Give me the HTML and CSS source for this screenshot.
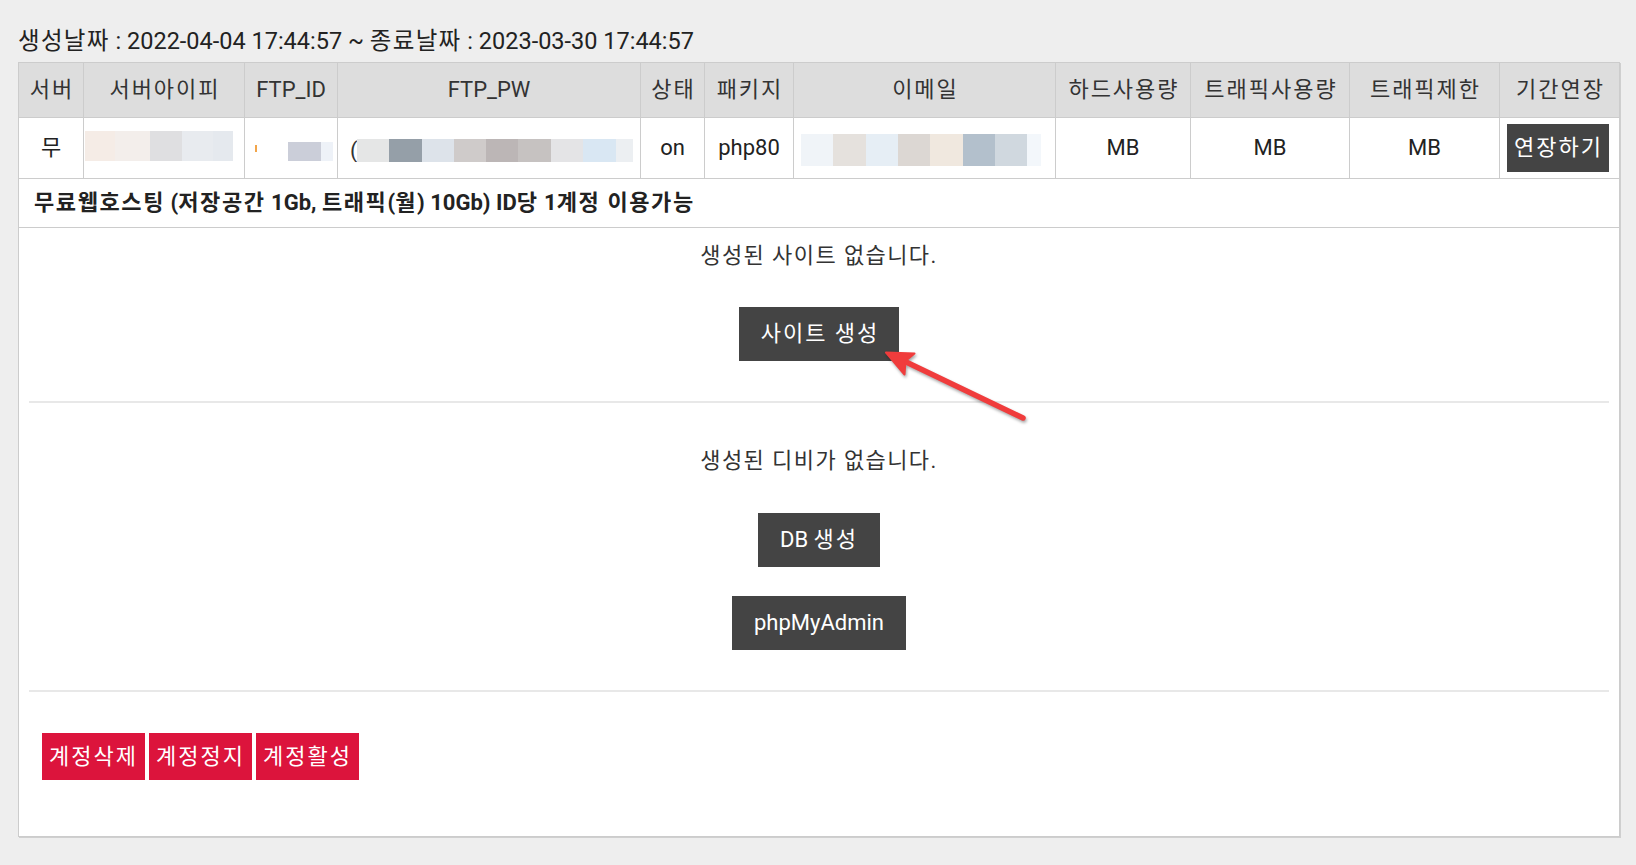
FILE: index.html
```html
<!DOCTYPE html>
<html lang="ko">
<head>
<meta charset="utf-8">
<title>호스팅 계정</title>
<link rel="stylesheet" href="styles.css">
</head>
<body>
<div class="page">
  <p class="period"><span class="ko">생성날짜</span> : 2022-04-04 17:44:57 ~ <span class="ko">종료날짜</span> : 2023-03-30 17:44:57</p>
  <table class="hosting">
    <colgroup>
      <col class="c-server"><col class="c-ip"><col class="c-ftpid"><col class="c-ftppw"><col class="c-state"><col class="c-pkg"><col class="c-mail"><col class="c-hdd"><col class="c-traffic"><col class="c-limit"><col class="c-extend">
    </colgroup>
    <thead>
      <tr>
        <th class="ko">서버</th><th class="ko">서버아이피</th><th>FTP_ID</th><th>FTP_PW</th><th class="ko">상태</th><th class="ko">패키지</th><th class="ko">이메일</th><th class="ko">하드사용량</th><th class="ko">트래픽사용량</th><th class="ko">트래픽제한</th><th class="ko">기간연장</th>
      </tr>
    </thead>
    <tbody>
      <tr class="data">
        <td>무</td>
        <td class="blur"><div class="mosaic m-ip">
          <span style="width:30px;background:#f5ece6"></span><span style="width:35px;background:#f3eeeb"></span><span style="width:32px;background:#dfdfe1"></span><span style="width:31px;background:#e8ebef"></span><span style="width:20px;background:#e5e9ee"></span>
        </div></td>
        <td class="blur"><div class="mosaic m-id">
          <span class="dot"></span><span style="width:33px;background:#cbced9"></span><span style="width:12px;background:#eef2f8"></span>
        </div></td>
        <td class="blur"><div class="mosaic m-pw">
          <span class="paren">(</span><span style="width:32px;background:#e5e6e6"></span><span style="width:33px;background:#959fa8"></span><span style="width:32px;background:#dde3ea"></span><span style="width:32px;background:#cfcbca"></span><span style="width:32px;background:#bcb6b6"></span><span style="width:33px;background:#c6c2c1"></span><span style="width:32px;background:#e4e4e6"></span><span style="width:33px;background:#d9e7f3"></span><span style="width:17px;background:#eceff2"></span>
        </div></td>
        <td>on</td>
        <td>php80</td>
        <td class="blur"><div class="mosaic m-mail">
          <span style="width:32px;background:#f0f4f8"></span><span style="width:33px;background:#e5e1dd"></span><span style="width:32px;background:#e6eef5"></span><span style="width:32px;background:#dcd7d3"></span><span style="width:33px;background:#f0e8df"></span><span style="width:32px;background:#b3c0cc"></span><span style="width:32px;background:#d0d8df"></span><span style="width:14px;background:#f3f7fb"></span>
        </div></td>
        <td>MB</td>
        <td>MB</td>
        <td>MB</td>
        <td class="extend"><a class="btn btn-dark btn-small ko">연장하기</a></td>
      </tr>
      <tr>
        <td class="note" colspan="11"><span class="ko">무료웹호스팅</span> (<span class="ko">저장공간</span> 1Gb, <span class="ko">트래픽</span>(<span class="ko">월</span>) 10Gb) ID<span class="ko">당</span> 1<span class="ko">계정 이용가능</span></td>
      </tr>
      <tr>
        <td class="content" colspan="11">
          <div class="section sites">
            <p class="empty ko">생성된 사이트 없습니다.</p>
            <a class="btn btn-dark btn-big ko">사이트 생성</a>
          </div>
          <hr class="sep">
          <div class="section dbs">
            <p class="empty ko">생성된 디비가 없습니다.</p>
            <a class="btn btn-dark btn-big">DB <span class="ko">생성</span></a>
            <a class="btn btn-dark btn-big pma">phpMyAdmin</a>
          </div>
          <hr class="sep">
          <div class="section account">
            <a class="btn btn-red ko">계정삭제</a>
            <a class="btn btn-red ko">계정정지</a>
            <a class="btn btn-red ko">계정활성</a>
          </div>
        </td>
      </tr>
    </tbody>
  </table>

  <svg class="arrow" width="170" height="100" viewBox="0 0 170 100" aria-hidden="true">
    <line x1="33" y1="25.5" x2="153" y2="83" stroke="#f03c3c" stroke-width="5.5" stroke-linecap="round"/>
    <polygon points="16,17.5 44.5,18.5 35.5,26 34.5,39.5" fill="#f03c3c" stroke="#f03c3c" stroke-width="2" stroke-linejoin="round"/>
  </svg>
</div>
</body>
</html>
```

FILE: styles.css
```css
* {
  box-sizing: border-box;
}

body {
  margin: 0;
  background: #eeeeee;
  font-family: Roboto, "Noto Sans CJK KR", sans-serif;
  font-size: 22px;
  line-height: 32px;
  color: #222;
}

.page {
  position: relative;
  padding: 25px 17px 29px 18px;
}

.ko {
  letter-spacing: 2px;
}

.period {
  margin: 0 0 5px;
  color: #222;
  font-size: 23.5px;
}

.period .ko {
  letter-spacing: 1.3px;
}

.hosting {
  width: 1601px;
  border-collapse: collapse;
  table-layout: fixed;
  background: #fff;
  box-shadow: 1px 1px 0 #cfcfcf;
}

.c-server { width: 65px; }
.c-ip { width: 161px; }
.c-ftpid { width: 93px; }
.c-ftppw { width: 303px; }
.c-state { width: 64px; }
.c-pkg { width: 89px; }
.c-mail { width: 262px; }
.c-hdd { width: 135px; }
.c-traffic { width: 159px; }
.c-limit { width: 150px; }
.c-extend { width: 120px; }

.hosting th,
.hosting td {
  border: 1px solid #cccccc;
}

.hosting th {
  background: #dddddd;
  color: #333;
  font-weight: normal;
  padding: 11px 0;
  text-align: center;
  white-space: nowrap;
}

.hosting th.ko {
  text-indent: 2px;
}

.hosting td {
  padding: 6px 0;
  text-align: center;
  vertical-align: middle;
  white-space: nowrap;
}

.hosting td.blur {
  padding: 0;
  text-align: left;
}

.mosaic {
  display: flex;
  align-items: stretch;
}

.mosaic span {
  display: block;
}

.m-ip {
  margin-left: 1px;
  height: 30px;
  margin-top: -5px;
}

.m-id {
  margin-left: 10px;
  height: 19px;
  margin-top: 7px;
}

.m-id .dot {
  width: 2px;
  height: 7px;
  margin-top: 3px;
  margin-right: 31px;
  background: #f2a54a;
}

.m-pw {
  margin-left: 12px;
  height: 23px;
  margin-top: 4px;
}

.m-pw .paren {
  width: 7px;
  overflow: hidden;
  color: #333;
  font-size: 22px;
  line-height: 23px;
}

.m-mail {
  margin-left: 7px;
  height: 32px;
  margin-top: 3px;
}

.hosting td.extend {
  padding: 6px 0 6px 7px;
  text-align: left;
}

.hosting td.note {
  text-align: left;
  font-weight: bold;
  padding: 8px 15px;
  color: #222;
}

.hosting td.note .ko {
  letter-spacing: 1.6px;
}

.hosting td.content {
  padding: 0 10px;
}

.btn {
  display: inline-block;
  color: #fff;
  text-decoration: none;
  white-space: nowrap;
}

.btn-dark {
  background: #444444;
}

.btn-small {
  padding: 8px 6px 8px 7px;
  line-height: 32px;
}

.btn-big {
  display: block;
  width: max-content;
  margin: 35px auto 0;
  padding: 11px 22px 11px 22px;
  line-height: 32px;
}

.btn-big.ko {
  padding-right: 20px;
}

.empty {
  margin: 0;
  text-align: center;
  color: #333;
}

.empty.ko {
  letter-spacing: 1.4px;
}

.section {
  text-align: center;
}

.sites {
  padding: 12px 0 40px;
}

.dbs {
  padding: 42px 0 40px;
}

.dbs .btn-big {
  margin-top: 36px;
}

.dbs .btn-big.pma {
  margin-top: 29px;
}

.account {
  display: flex;
  gap: 4px;
  padding: 41px 13px 56px;
}

.btn-red {
  background: #dc143c;
  padding: 8px 7px 7px 7px;
  line-height: 32px;
}

.sep {
  margin: 0;
  border: 0;
  border-top: 2px solid #e8e8e8;
  height: 0;
}

.arrow {
  position: absolute;
  left: 870px;
  top: 335px;
  filter: drop-shadow(1px 2px 1.5px rgba(0, 0, 0, 0.35));
}
```
